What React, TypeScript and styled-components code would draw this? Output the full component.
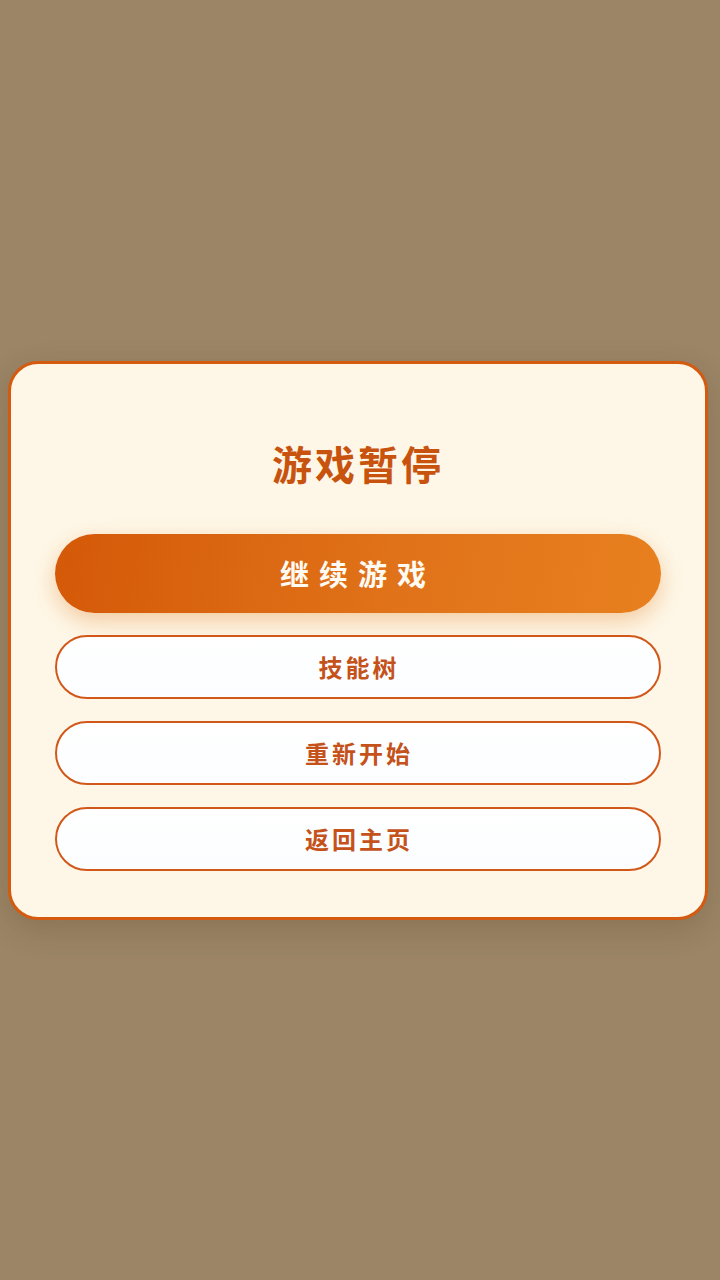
import { createGlobalStyle } from 'styled-components'
import styled from 'styled-components'

const GlobalStyle = createGlobalStyle`
  html, body {
    margin: 0;
    padding: 0;
    background: #9b8566;
  }
  body {
    font-family: "Noto Sans CJK SC", "Noto Sans", sans-serif;
  }
`

const Screen = styled.div`
  width: 720px;
  height: 1280px;
  display: flex;
  align-items: center;
  padding-left: 8px;
  box-sizing: border-box;
`

const Panel = styled.div`
  width: 700px;
  box-sizing: border-box;
  padding: 72px 44px 46px;
  background: #fef7e7;
  border: 3px solid #d45a10;
  border-radius: 30px;
  box-shadow: 0 10px 30px rgba(60, 40, 10, 0.18);
  display: flex;
  flex-direction: column;
  align-items: stretch;
`

const Title = styled.h2`
  margin: 0 0 44px;
  text-align: center;
  font-size: 40px;
  font-weight: 700;
  letter-spacing: 3px;
  line-height: 54px;
  color: #c8530f;
`

const ButtonList = styled.div`
  display: flex;
  flex-direction: column;
  gap: 22px;
`

const PrimaryButton = styled.button`
  height: 79px;
  border: none;
  border-radius: 40px;
  background: linear-gradient(100deg, #d45908 0%, #e07219 55%, #e8801f 100%);
  box-shadow: 0 8px 22px rgba(224, 120, 30, 0.35);
  color: #fffaf2;
  font-family: inherit;
  font-size: 29px;
  font-weight: 700;
  letter-spacing: 10px;
  cursor: pointer;
`

const SecondaryButton = styled.button`
  height: 64px;
  border: 2px solid #d2581a;
  border-radius: 32px;
  background: linear-gradient(180deg, #ffffff 0%, #fbfdff 100%);
  color: #c4521a;
  font-family: inherit;
  font-size: 24px;
  font-weight: 700;
  letter-spacing: 3px;
  text-indent: 2px;
  cursor: pointer;
`

const actions = ['技能树', '重新开始', '返回主页']

export default function App() {
  return (
    <>
      <GlobalStyle />
      <Screen>
        <Panel>
          <Title>游戏暂停</Title>
          <ButtonList>
            <PrimaryButton>继续游戏</PrimaryButton>
            {actions.map(label => (
              <SecondaryButton key={label}>{label}</SecondaryButton>
            ))}
          </ButtonList>
        </Panel>
      </Screen>
    </>
  )
}
